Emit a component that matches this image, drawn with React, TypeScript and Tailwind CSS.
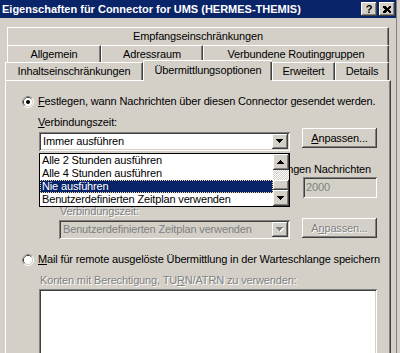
import React from 'react'

const raised = 'shadow-[inset_-1px_-1px_#404040,inset_1px_1px_#fff,inset_-2px_-2px_#808080]'
const sunken = 'shadow-[inset_1px_1px_#808080,inset_-1px_-1px_#fff,inset_2px_2px_#404040,inset_-2px_-2px_#d4d0c8]'
const etched = 'text-[#808080] [text-shadow:1px_1px_0_#fff]'
const tab = 'flex items-center justify-center border-l border-t border-r border-white border-r-[#404040] shadow-[inset_-1px_0_#808080] bg-[#d4d0c8]'

function Arrow({ up, disabled }: { up?: boolean; disabled?: boolean }) {
    const d = up
        ? 'M3 0h1v1h1v1h1v1h1v1h-7v-1h1v-1h1v-1h1z'
        : 'M0 0h7v1h-1v1h-1v1h-1v1h-1v-1h-1v-1h-1v-1h-1z'
    return (
        <svg width="8" height="5" viewBox="0 0 8 5" shapeRendering="crispEdges">
            {disabled && <path d={d} fill="#fff" transform="translate(1 1)" />}
            <path d={d} fill={disabled ? '#808080' : '#000'} />
        </svg>
    )
}

function Radio({ checked }: { checked?: boolean }) {
    return (
        <svg width="12" height="12" viewBox="0 0 12 12" className="shrink-0">
            <circle cx="6" cy="6" r="5.5" fill="none" stroke="#fff" />
            <path d="M2.11 9.89A5.5 5.5 0 0 1 9.89 2.11" fill="none" stroke="#808080" />
            <circle cx="6" cy="6" r="4.5" fill="none" stroke="#d4d0c8" />
            <path d="M2.82 9.18A4.5 4.5 0 0 1 9.18 2.82" fill="none" stroke="#404040" />
            <circle cx="6" cy="6" r="4" fill="#fff" />
            {checked && <circle cx="6" cy="6" r="2" fill="#000" />}
        </svg>
    )
}

function Combo({ text, disabled, className }: { text: string; disabled?: boolean; className: string }) {
    return (
        <div className={`flex h-[19px] p-[2px] ${sunken} ${disabled ? 'bg-[#d4d0c8]' : 'bg-white'} ${className}`}>
            <div className={`flex-1 flex items-center pl-[2px] whitespace-nowrap overflow-hidden ${disabled ? 'text-[#808080]' : ''}`}>{text}</div>
            <div className={`w-[16px] flex items-center justify-center bg-[#d4d0c8] ${raised}`}>
                <Arrow disabled={disabled} />
            </div>
        </div>
    )
}

function DropList() {
    const items = ['Alle 2 Stunden ausführen', 'Alle 4 Stunden ausführen', 'Nie ausführen', 'Benutzerdefinierten Zeitplan verwenden']
    return (
        <div className="absolute left-0 top-[21px] z-20 flex w-[251px] h-[54px] border border-black bg-white">
            <div className="flex-1 flex flex-col">
                {items.map((it, i) => (
                    <div
                        key={it}
                        className={`h-[13px] leading-[11px] pl-[1px] whitespace-nowrap overflow-hidden border border-dotted ${i === 2 ? 'bg-[#0a246a] text-white border-[#f5db95]' : 'border-transparent'}`}
                    >
                        {it}
                    </div>
                ))}
            </div>
            <div className="w-[16px] flex flex-col">
                <div className={`h-[16px] flex items-center justify-center bg-[#d4d0c8] ${raised}`}><Arrow up /></div>
                <div className="h-[10px] bg-[image:repeating-conic-gradient(#fff_0_25%,#d4d0c8_0_50%)] bg-[length:2px_2px]" />
                <div className={`h-[10px] bg-[#d4d0c8] ${raised}`} />
                <div className={`h-[16px] flex items-center justify-center bg-[#d4d0c8] ${raised}`}><Arrow /></div>
            </div>
        </div>
    )
}

export default function App() {
    return (
        <div className="w-[400px] h-[353px] overflow-hidden flex items-start bg-[#d4d0c8] text-black text-[11px] tracking-[-0.15px] leading-[13px] font-['Liberation_Sans',Arial,sans-serif]">
            <div className="w-[396px] flex flex-col [&>*]:shrink-0">
                <div className="h-[18px] bg-[#0a246a] flex items-center pl-[2px] pr-[1px]">
                    <span className="text-white font-bold text-[11px] tracking-normal whitespace-nowrap">Eigenschaften für Connector for UMS (HERMES-THEMIS)</span>
                    <div className="ml-auto flex gap-[2px]">
                        <div className={`w-[16px] h-[14px] bg-[#d4d0c8] flex items-center justify-center font-bold text-[11px] leading-none ${raised}`}>?</div>
                        <div className={`w-[16px] h-[14px] bg-[#d4d0c8] flex items-center justify-center ${raised}`}>
                            <svg width="8" height="7" viewBox="0 0 8 7" shapeRendering="crispEdges">
                                <path d="M0 0h2l2 2l2-2h2v1l-2 2.5l2 2.5v1h-2l-2-2l-2 2h-2v-1l2-2.5l-2-2.5z" fill="#000" />
                            </svg>
                        </div>
                    </div>
                </div>

                <div className={`mt-[9px] ml-[7px] w-[382px] h-[18px] ${tab}`}>Empfangseinschränkungen</div>
                <div className="flex ml-[7px] h-[17px]">
                    <div className={`w-[94px] ${tab}`}>Allgemein</div>
                    <div className={`w-[102px] ${tab}`}>Adressraum</div>
                    <div className={`w-[186px] ${tab}`}>Verbundene Routinggruppen</div>
                </div>
                <div className="flex items-end ml-[5px] h-[20px] -mt-[2px]">
                    <div className={`w-[138px] h-[18px] ${tab}`}>Inhaltseinschränkungen</div>
                    <div className={`relative z-10 w-[129px] h-[21px] -mb-[1px] !items-start pt-[3px] ${tab} shadow-none border-r-0`}>
                        <span>Übermittlungsoptionen</span>
                        <span className="absolute right-0 top-[1px] bottom-[1px] w-[2px] border-l border-l-[#808080] border-r border-r-[#404040]" />
                    </div>
                    <div className={`w-[63px] h-[18px] ${tab}`}>Erweitert</div>
                    <div className={`w-[54px] h-[18px] ${tab}`}>Details</div>
                </div>

                <div className="relative h-[300px] ml-[5px] w-[386px] flex flex-col [&>*]:shrink-0 border-l border-t border-r border-white border-r-[#404040] shadow-[inset_-1px_0_#808080]">
                    <div className="flex items-center gap-[4px] ml-[16px] mt-[14px] h-[13px]">
                        <Radio checked />
                        <span className="whitespace-nowrap"><u>F</u>estlegen, wann Nachrichten über diesen Connector gesendet werden.</span>
                    </div>
                    <div className="ml-[32px] mt-[8px] leading-[12px]"><u>V</u>erbindungszeit:</div>
                    <div className="flex ml-[33px]">
                        <div className="relative mt-[4px]">
                            <Combo text="Immer ausführen" className="w-[251px]" />
                            <DropList />
                        </div>
                        <div className={`ml-[12px] w-[75px] h-[20px] flex items-center justify-center ${raised}`}>
                            <span><u>A</u>npassen...</span>
                        </div>
                    </div>
                    <div className="flex justify-end ml-[33px] mt-[12px] w-[332px] whitespace-nowrap overflow-hidden">Abweichende Übermittlungszeiten bei überlangen Nachrichten</div>
                    <div className={`ml-[297px] mt-[1px] w-[74px] h-[21px] flex items-center pl-[3px] text-[#808080] ${sunken}`}>2000</div>
                    <div className={`ml-[54px] mt-[7px] ${etched}`}>Verbindungszeit:</div>
                    <div className="flex ml-[53px]">
                        <Combo text="Benutzerdefinierten Zeitplan verwenden" disabled className="w-[231px] mt-[2px]" />
                        <div className={`ml-[12px] w-[75px] h-[20px] flex items-center justify-center ${raised}`}>
                            <span className={etched}>A<u>n</u>passen...</span>
                        </div>
                    </div>
                    <div className="flex items-center gap-[4px] ml-[16px] mt-[14px] h-[13px]">
                        <Radio />
                        <span className="whitespace-nowrap"><u>M</u>ail für remote ausgelöste Übermittlung in der Warteschlange speichern</span>
                    </div>
                    <div className={`ml-[34px] mt-[8px] whitespace-nowrap ${etched}`}>Konten mit Berechtigung, TU<u>R</u>N/ATRN zu verwenden:</div>
                    <div className={`ml-[33px] mt-[2px] w-[338px] h-[80px] bg-white ${sunken}`} />
                </div>
            </div>
            <div className="w-[4px] h-full flex">
                <div className="w-[1px] bg-[#808080]" />
            </div>
        </div>
    )
}
